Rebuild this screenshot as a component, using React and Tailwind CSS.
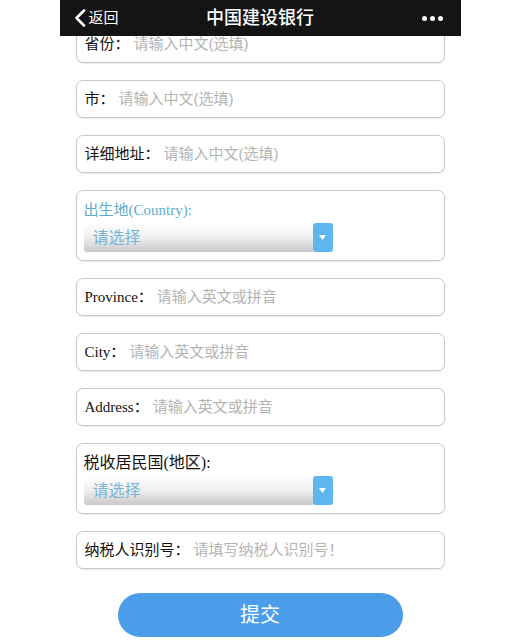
import React from "react";

const serif = { fontFamily: '"Liberation Serif", "Noto Sans CJK SC", serif' };
const sans = { fontFamily: '"Liberation Sans", "Noto Sans CJK SC", sans-serif' };

function Field({ label, placeholder }) {
  return (
    <div className="h-[38px] border border-[#c9c9c9] rounded-[7px] bg-white flex items-center pl-[8px] shadow-[0_1px_1px_rgba(0,0,0,0.08)]">
      <span className="text-[15px] text-[#111] whitespace-nowrap" style={serif}>{label}</span>
      <span className="text-[15px] text-[#b4b4b4] ml-[4px] whitespace-nowrap" style={sans}>{placeholder}</span>
    </div>
  );
}

function SelectField({ label, labelClass }) {
  return (
    <div className="h-[71px] border border-[#c9c9c9] rounded-[7px] bg-white pt-[9px] pl-[7px] shadow-[0_1px_1px_rgba(0,0,0,0.08)]">
      <div className={`h-[20px] leading-[20px] text-[15px] ${labelClass}`} style={serif}>{label}</div>
      <div className="mt-[3px] w-[249px] h-[29px] flex rounded-l-[3px] overflow-hidden">
        <div className="flex-1 bg-gradient-to-b from-[#ffffff] via-[#efefef] to-[#c8c8c8] flex items-center pl-[9px]">
          <span className="text-[16px] text-[#78b4d8]" style={sans}>请选择</span>
        </div>
        <div className="w-[20px] bg-[#5db7ee] rounded-[3px] flex items-center justify-center">
          <svg width="7" height="5" viewBox="0 0 7 5"><path d="M0 0 L7 0 L3.5 5 Z" fill="#ffffff" /></svg>
        </div>
      </div>
    </div>
  );
}

export default function App() {
  return (
    <div className="w-[520px] h-[642px] bg-white overflow-hidden">
      <div className="relative w-[401px] mx-auto">
        <div className="absolute top-0 left-0 right-0 h-[36px] bg-[#141414] flex items-center px-[14px] z-10">
          <div className="flex items-center w-[90px]">
            <svg width="12" height="18" viewBox="0 0 12 18" className="mr-[3px]">
              <path d="M10 1.5 L2.5 9 L10 16.5" stroke="#ffffff" strokeWidth="2.6" fill="none" strokeLinecap="round" strokeLinejoin="round" />
            </svg>
            <span className="text-[15px] text-white" style={sans}>返回</span>
          </div>
          <div className="flex-1 text-center text-[18px] text-white font-medium" style={sans}>中国建设银行</div>
          <div className="w-[90px] flex justify-end gap-[3px] pr-[4px]">
            <span className="w-[5px] h-[5px] rounded-full bg-white"></span>
            <span className="w-[5px] h-[5px] rounded-full bg-white"></span>
            <span className="w-[5px] h-[5px] rounded-full bg-white"></span>
          </div>
        </div>
        <div className="px-[16px] pt-[25px] flex flex-col gap-[17px]">
          <Field label="省份：" placeholder="请输入中文(选填)" />
          <Field label="市：" placeholder="请输入中文(选填)" />
          <Field label="详细地址：" placeholder="请输入中文(选填)" />
          <SelectField label="出生地(Country):" labelClass="text-[#5eaccc]" />
          <Field label="Province：" placeholder="请输入英文或拼音" />
          <Field label="City：" placeholder="请输入英文或拼音" />
          <Field label="Address：" placeholder="请输入英文或拼音" />
          <SelectField label="税收居民国(地区):" labelClass="text-[#111] text-[16px]" />
          <Field label="纳税人识别号：" placeholder="请填写纳税人识别号！" />
        </div>
        <div className="mt-[24px] w-[285px] h-[44px] mx-auto rounded-full bg-[#4b9de9] flex items-center justify-center">
          <span className="text-[20px] text-white" style={sans}>提交</span>
        </div>
      </div>
    </div>
  );
}
